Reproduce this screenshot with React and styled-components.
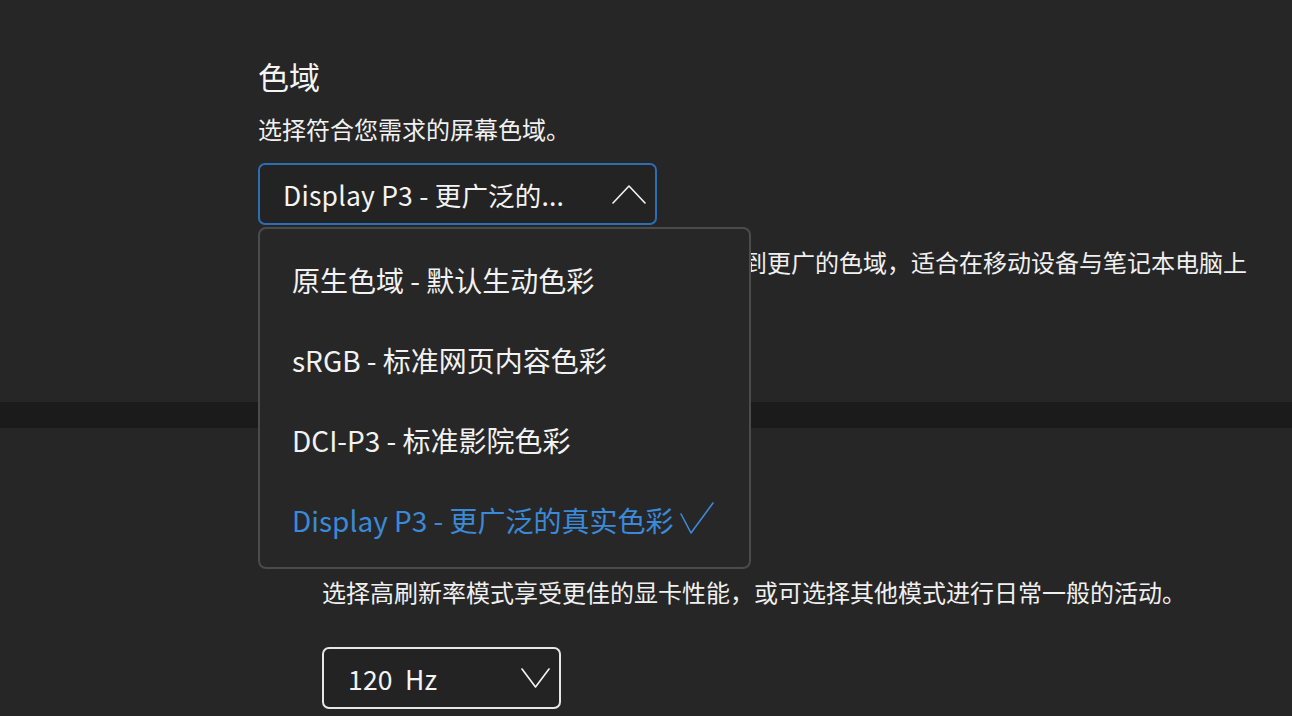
import React from "react";
import styled, { createGlobalStyle } from "styled-components";

const GlobalStyle = createGlobalStyle`
  html, body {
    margin: 0;
    padding: 0;
    background: #262626;
  }
  body {
    font-family: "Noto Sans CJK SC", "Noto Sans", sans-serif;
    color: #f2f2f2;
    overflow: hidden;
  }
`;

const options = [
  "原生色域 - 默认生动色彩",
  "sRGB - 标准网页内容色彩",
  "DCI-P3 - 标准影院色彩",
  "Display P3 - 更广泛的真实色彩",
];

const App = () => {
  const selected = 3;
  return (
    <Page>
      <GlobalStyle />
      <Section>
        <Title>色域</Title>
        <Subtitle>选择符合您需求的屏幕色域。</Subtitle>
        <SelectWrap>
          <Select $active $width={399}>
            <SelectText $size={26.5}>Display P3 - 更广泛的...</SelectText>
            <Chevron width="34" height="19" viewBox="0 0 34 19" $right={9}>
              <polyline points="1,18 17,1 33,18" />
            </Chevron>
          </Select>
          <Menu>
            {options.map((opt, i) => (
              <MenuItem key={opt} $selected={i === selected}>
                {opt}
                {i === selected && (
                  <Check width="34" height="32" viewBox="0 0 34 32">
                    <polyline points="1,12 11,31 33,1" />
                  </Check>
                )}
              </MenuItem>
            ))}
          </Menu>
        </SelectWrap>
        <Description>
          Display P3 能显示比 sRGB 多约25% 的颜色，到更广的色域，适合在移动设备与笔记本电脑上
          <br />
          使用。
        </Description>
      </Section>
      <Band />
      <Section $indent>
        <Title>刷新率</Title>
        <Subtitle>
          选择高刷新率模式享受更佳的显卡性能，或可选择其他模式进行日常一般的活动。
        </Subtitle>
        <SelectWrap>
          <Select $width={239} $gap={39}>
            <SelectText $size={26.5} $pad={24}>120&nbsp; Hz</SelectText>
            <Chevron width="29" height="22" viewBox="0 0 29 22" $right={9}>
              <polyline points="1,2 14.5,20 28,2" />
            </Chevron>
          </Select>
        </SelectWrap>
      </Section>
    </Page>
  );
};

const Page = styled.div`
  width: 1292px;
  height: 716px;
  display: flex;
  flex-direction: column;
  background: #262626;
`;

const Section = styled.section`
  display: flex;
  flex-direction: column;
  align-items: flex-start;
  padding: ${(p) => (p.$indent ? "91px 0 0 322px" : "56px 0 124px 258px")};
`;

const Title = styled.h2`
  margin: 0;
  font-size: 31px;
  line-height: 40px;
  font-weight: 400;
  color: #f4f4f4;
`;

const Subtitle = styled.p`
  margin: 17px 0 0;
  font-size: 24px;
  line-height: 32px;
  color: #f0f0f0;
  white-space: nowrap;
`;

const SelectWrap = styled.div`
  position: relative;
`;

const Select = styled.div`
  box-sizing: border-box;
  width: ${(p) => p.$width}px;
  height: 62px;
  margin-top: ${(p) => p.$gap || 18}px;
  display: flex;
  align-items: center;
  justify-content: space-between;
  border: 2px solid ${(p) => (p.$active ? "#2c6db3" : "#e6e6e6")};
  border-radius: 7px;
  background: #232323;
`;

const SelectText = styled.span`
  padding-left: ${(p) => p.$pad || 23}px;
  font-size: ${(p) => p.$size}px;
  letter-spacing: 0.2px;
  color: #f4f4f4;
  white-space: nowrap;
`;

const Chevron = styled.svg`
  margin-right: ${(p) => p.$right}px;
  fill: none;
  stroke: #f4f4f4;
  stroke-width: 1.6;
  stroke-linecap: round;
  stroke-linejoin: round;
`;

const Menu = styled.div`
  position: absolute;
  top: calc(100% + 2px);
  left: 0;
  z-index: 10;
  box-sizing: border-box;
  width: 493px;
  height: 342px;
  padding: 11px 0 7px;
  border: 2px solid #4b4b4b;
  border-radius: 8px;
  background: #272727;
`;

const MenuItem = styled.div`
  height: 80px;
  display: flex;
  align-items: center;
  padding-left: 32px;
  font-size: 28px;
  color: ${(p) => (p.$selected ? "#3b8ad9" : "#f2f2f2")};
  white-space: nowrap;
`;

const Check = styled.svg`
  margin-left: 6px;
  margin-top: -4px;
  fill: none;
  stroke: #3b8ad9;
  stroke-width: 1.6;
  stroke-linecap: round;
  stroke-linejoin: round;
`;

const Description = styled.p`
  margin: 21px 0 -32px;
  font-size: 24px;
  line-height: 32px;
  color: #f0f0f0;
  white-space: nowrap;
`;

const Band = styled.div`
  height: 26px;
  flex-shrink: 0;
  background: #1b1b1b;
`;

export default App;
